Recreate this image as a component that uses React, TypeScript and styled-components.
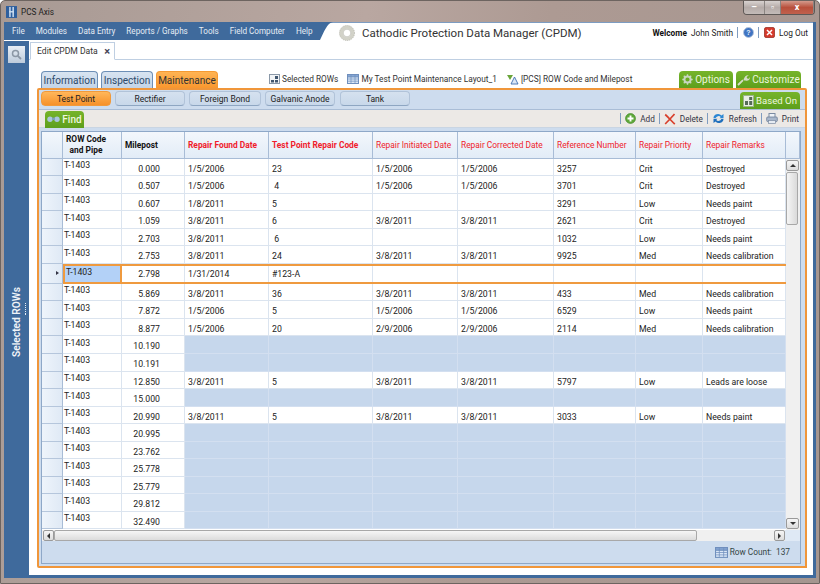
import React from 'react';
import styled, { createGlobalStyle } from 'styled-components';

const Global = createGlobalStyle`
  html, body { margin: 0; padding: 0; background: #fff; }
  #root { width: 820px; height: 584px; overflow: hidden; }
  * { box-sizing: border-box; }
`;

const Win = styled.div`
  width: 820px; height: 584px; display: flex; flex-direction: column;
  font-family: Roboto, "Noto Sans", sans-serif; font-size: 9px; color: #222;
  background: linear-gradient(100deg, #a89a94 0%, #b9a7a1 40%, #ad9a93 60%, #a59690 100%);
  border: 1px solid #6d6460; border-radius: 5px 5px 0 0; overflow: hidden;
`;
const TitleBar = styled.div`
  height: 21px; flex: none; display: flex; align-items: center; padding-left: 5px; gap: 4px;
  font-size: 8.2px; color: #222;
`;
const WinButtons = styled.div`
  margin-left: auto; margin-right: 4px; margin-top: -7px; height: 14px; width: 72px; display: flex;
  border: 1px solid #5e5957; border-top: none; border-radius: 0 0 4px 4px; overflow: hidden;
`;
const WinBtn = styled.div<{ $red?: boolean; $w: number }>`
  width: ${p => p.$w}px; display: flex; align-items: center; justify-content: center;
  background: ${p => p.$red ? 'linear-gradient(#d49a8c,#b8503c 50%,#c0604c)' : 'linear-gradient(#d8d2d0,#b5aba8 50%,#c3bbb8)'};
  border-right: 1px solid #8b8582; color: #fff; font-size: 9px; font-weight: 700; line-height: 1;
`;
const Frame = styled.div`
  flex: 1; margin: 0 3px 5px 3px; background: #3f6a9c; display: flex; flex-direction: column; padding-bottom: 3px; padding-right: 3px;
  min-height: 0;
`;
const Head = styled.div`
  height: 19px; flex: none; display: flex; background: #fff; margin-right: -3px; border-right: 3px solid #3f6a9c;
  box-shadow: inset 0 1px 0 #7c9cc2;
`;
const Menu = styled.div`
  display: flex; align-items: center; height: 18px; background: #3f6a9c; color: #e6edf5; padding-left: 8px; gap: 11px; font-size: 8.15px; width: 316px; flex: none;
  span { white-space: nowrap; }
`;
const Curve = styled.svg` width: 13px; height: 18px; flex: none; `;
const AppTitle = styled.div`
  display: flex; align-items: center; gap: 7px; font-size: 11.5px; color: #333; margin-left: 6px; padding-top: 2px; white-space: nowrap;
`;
const UserBox = styled.div`
  margin-left: auto; display: flex; align-items: center; padding-right: 5px; padding-top: 2px; font-size: 8.3px; white-space: nowrap;
  b { font-weight: 700; color: #111; margin-right: 4px; }
`;
const VSep = styled.i`
  display: inline-block; width: 1px; height: 11px; background: #7f9cc0; margin: 0 5px 0 4px; flex: none;
`;
const ToolSep = styled(VSep)` margin: 0 4px; `;
const Body = styled.div` flex: 1; display: flex; min-height: 0; `;
const Side = styled.div`
  width: 25px; flex: none; display: flex; flex-direction: column; align-items: center; padding-top: 5px;
`;
const SearchBtn = styled.div`
  width: 17px; height: 17px; background: linear-gradient(#e8eef5,#bdcbdb); margin-left: -1px; display: flex; align-items: center; justify-content: center;
`;
const SideLabel = styled.div`
  margin-top: 224px; writing-mode: vertical-rl; transform: rotate(180deg); position: relative;
  color: #f0f4f8; font-weight: 600; font-size: 10.2px; white-space: nowrap; margin-left: -1px;
`;
const Dots = styled.span`
  position: absolute; left: -4px; bottom: 16px; width: 1px; height: 12px; border-left: 1px dotted #e8eef5;
`;
const Content = styled.div`
  flex: 1; min-width: 0; background: #fff; display: flex; flex-direction: column; border-top: 1px solid #fff;
`;
const TabStrip = styled.div`
  height: 18px; flex: none; display: flex; padding-left: 1px; border-bottom: 1px solid #bfcfe2;
`;
const DocTab = styled.div`
  width: 85px; height: 18px; background: #fff; border: 1px solid #bfcfe2; border-bottom: 1px solid #fff; display: flex; align-items: center; justify-content: space-between; padding: 0 4px 0 6px; font-size: 8.6px; color: #333;
  b { font-size: 11px; font-weight: 700; color: #445; line-height: 1; }
`;
const TopRow = styled.div`
  height: 17px; margin-top: 11px; flex: none; display: flex; align-items: flex-end; padding-left: 12px; position: relative; z-index: 1;
`;
const OuterTab = styled.div<{ $on?: boolean; $w: number }>`
  width: ${p => p.$w}px; height: 17px; margin-right: 3px; border-radius: 4px 4px 0 0; display: flex; align-items: center; justify-content: center;
  font-size: 10px; color: ${p => p.$on ? '#333' : '#2d4a6a'}; white-space: nowrap;
  background: ${p => p.$on ? 'linear-gradient(#ffb454,#f9972e)' : 'linear-gradient(#d8e4f1,#c3d4e8)'};
  border: 1px solid ${p => p.$on ? '#f59a33' : '#6d8fb6'}; border-bottom: none;
`;
const Crumbs = styled.div`
  display: flex; align-items: center; margin-left: 48px; height: 17px; font-size: 8.3px; color: #333; white-space: nowrap; padding-bottom: 1px;
`;
const Crumb = styled.span<{ $gap: number }>`
  display: inline-flex; align-items: center; gap: 2px; margin-right: ${p => p.$gap}px;
`;
const GreenTab = styled.div<{ $w: number }>`
  width: ${p => p.$w}px; height: 17px; border-radius: 4px 4px 0 0; background: linear-gradient(#76b42a,#5d9f1c); color: #eef7df;
  display: flex; align-items: center; justify-content: center; gap: 2px; font-size: 10px; white-space: nowrap; flex: none;
`;
const GreenGroup = styled.div` margin-left: auto; margin-right: 12px; display: flex; gap: 3px; `;
const Panel = styled.div`
  margin: 0 6px 7px 8px; flex: 1; min-height: 0; border: 2px solid #f0963a; border-radius: 2px 2px 0 0; border-bottom-left-radius: 2px;
  background: #cddcee; display: flex; flex-direction: column; position: relative;
`;
const SubBar = styled.div`
  height: 20px; flex: none; display: flex; align-items: flex-end; padding: 0 5px 0 2px; border-bottom: 1px solid #a9bdd6;
`;
const SubBtn = styled.div<{ $on?: boolean; $w: number; $gap: number }>`
  width: ${p => p.$w}px; height: 15px; margin-right: ${p => p.$gap}px; margin-bottom: 3px; border-radius: 4px; display: flex; align-items: center; justify-content: center;
  font-size: 8.5px; color: #222; white-space: nowrap;
  background: ${p => p.$on ? 'linear-gradient(#ffb75b,#f6912a)' : 'linear-gradient(#d5e1ef,#c8d8ea)'};
  border: 1px solid ${p => p.$on ? '#f19a3b' : '#b1c3d9'}; border-bottom-color: ${p => p.$on ? '#f19a3b' : '#8ea6c2'};
`;
const BasedOn = styled(GreenTab)` margin-left: auto; font-size: 9.6px; height: 17px; `;
const ToolBar = styled.div`
  height: 18px; flex: none; background: #ece9e6; display: flex; align-items: center; padding: 0 6px; border-bottom: 1px solid #c9d5e3;
`;
const FindBtn = styled(GreenTab)` margin-top: 1px; height: 17px; font-weight: 500; `;
const Actions = styled.div`
  margin-left: auto; display: flex; align-items: center; font-size: 8.2px; color: #334; white-space: nowrap;
`;
const Action = styled.span`
  display: inline-flex; align-items: center; gap: 4px;
`;
const GridBox = styled.div`
  margin: 3px 4px 0 2px; border: 1px solid #8ea8c8; border-bottom: none; background: #fff; display: flex; flex-direction: column; flex: none; width: 760px;
`;
const COLS = '21px 59px 63px 84px 104px 85px 96px 82px 67px 83px 14px';
const HeadRow = styled.div`
  display: grid; grid-template-columns: ${COLS}; height: 26.5px; background: linear-gradient(#f3f7fc,#e2ecf7); border-bottom: 1px solid #a8bcd6;
`;
const HeadCell = styled.div<{ $kind?: 'bold' | 'red' | 'redBold'; $center?: boolean }>`
  border-right: 1px solid #a8bcd6; display: flex; align-items: center; padding: 1px 0 0 3px; line-height: 11px; font-size: 8.4px; white-space: nowrap;
  color: ${p => p.$kind === 'bold' ? '#111' : '#f01c2c'}; font-weight: ${p => p.$kind === 'red' ? 400 : 700};
  text-align: ${p => p.$center ? 'center' : 'left'};
`;
const BodyWrap = styled.div` display: flex; height: 371.5px; overflow: hidden; `;
const Rows = styled.div` width: 744px; flex: none; display: flex; flex-direction: column; `;
const Row = styled.div<{ $sel?: boolean }>`
  display: grid; grid-template-columns: 21px 59px 63px 84px 104px 85px 96px 82px 67px 83px; height: ${p => p.$sel ? 20 : 17.55}px; flex: none; position: relative;
`;
const SelFrame = styled.div`
  position: absolute; left: 21px; right: 0; top: 0; bottom: 0; border-top: 2px solid #ef9a3f; border-bottom: 2px solid #ef9a3f; pointer-events: none;
`;
const RowHeadCell = styled.div`
  background: linear-gradient(90deg,#eef4fb,#dfe9f5); border-right: 1px solid #a8bcd6; border-bottom: 1px solid #b5c6dc; display: flex; align-items: center; justify-content: flex-end; padding-right: 3px;
  i { width: 0; height: 0; border-left: 3px solid #334; border-top: 2.5px solid transparent; border-bottom: 2.5px solid transparent; }
`;
const RowCode = styled.div<{ $sel?: boolean }>`
  border-right: ${p => p.$sel ? '2px solid #ef9a3f' : '1px solid #dbe4ef'}; border-bottom: 1px solid #dbe4ef;
  border-left: ${p => p.$sel ? '2px solid #ef9a3f' : '0'};
  padding: ${p => p.$sel ? '3px 0 0 1px' : '1.5px 0 0 1px'}; font-size: 8.7px; line-height: 11px; color: #222; background: ${p => p.$sel ? '#b3d1f7' : '#fff'};
`;
const Mile = styled.div<{ $sel?: boolean }>`
  border-right: 1px solid #dbe4ef; border-bottom: 1px solid #dbe4ef; text-align: right; padding: ${p => p.$sel ? 5.5 : 5}px 24px 0 0; font-size: 8.7px; line-height: 11px; background: #fff; color: #222;
`;
const Cell = styled.div<{ $blue?: boolean; $sel?: boolean }>`
  border-right: 1px solid ${p => p.$blue ? '#d3dff0' : '#dbe4ef'}; border-bottom: 1px solid ${p => p.$blue ? '#d3dff0' : '#dbe4ef'};
  background: ${p => p.$blue ? '#c6d7ec' : '#fff'}; padding: ${p => p.$sel ? 5.5 : 5}px 0 0 3px; font-size: 8.7px; line-height: 11px; color: #222; white-space: pre;
`;
const VScroll = styled.div`
  width: 14px; flex: none; background: #f0f0f0; display: flex; flex-direction: column; padding: 1px 0;
`;
const ScrollBtn = styled.div<{ $w: number; $h: number }>`
  width: ${p => p.$w}px; height: ${p => p.$h}px; flex: none; background: linear-gradient(#f6f6f6,#dcdcdc); border: 1px solid #9a9a9a; border-radius: 2px; display: flex; align-items: center; justify-content: center;
`;
const Arrow = styled.i<{ $dir: 'up' | 'down' | 'left' | 'right' }>`
  width: 0; height: 0; display: block;
  ${p => p.$dir === 'up' && 'border-bottom: 3px solid #333; border-left: 3px solid transparent; border-right: 3px solid transparent;'}
  ${p => p.$dir === 'down' && 'border-top: 3px solid #333; border-left: 3px solid transparent; border-right: 3px solid transparent;'}
  ${p => p.$dir === 'left' && 'border-right: 3px solid #333; border-top: 3px solid transparent; border-bottom: 3px solid transparent;'}
  ${p => p.$dir === 'right' && 'border-left: 3px solid #333; border-top: 3px solid transparent; border-bottom: 3px solid transparent;'}
`;
const VThumb = styled.div`
  width: 12px; height: 53px; margin: 1px 0 0 0; background: linear-gradient(90deg,#f5f5f5,#dadada); border: 1px solid #a8a8a8; border-radius: 2px; flex: none;
`;
const HBar = styled.div`
  height: 11px; flex: none; display: flex; background: #f0f0f0; padding-left: 1px; width: 758px;
`;
const HThumb = styled.div`
  width: 643px; height: 11px; background: linear-gradient(#f6f6f6,#dcdcdc); border: 1px solid #a8a8a8; border-radius: 2px; flex: none;
`;
const HGap = styled.div` flex: 1; `;
const HCorner = styled.div` width: 15px; height: 11px; background: #dfe9f5; flex: none; `;
const GridOuter = styled.div`
  display: flex; flex-direction: column; flex: 1; min-height: 0;
`;
const HWrap = styled.div`
  margin: 0 4px 0 2px; width: 760px; border-left: 1px solid #8ea8c8; border-right: 1px solid #8ea8c8; display: flex; flex: none;
`;
const Foot = styled.div`
  margin: 0 4px 2px 2px; width: 760px; flex: 1; border: 1px solid #8ea8c8; border-top: none; background: #cddcee; display: flex; align-items: flex-start; justify-content: flex-end; padding: 6px 10px 0 0; gap: 2px; font-size: 8.3px; color: #344;
`;

const GridIcon = ({ s = 11 }: { s?: number }) => (
  <svg width={s + 1} height={s - 1} viewBox="0 0 12 10">
    <rect x=".5" y=".5" width="11" height="9" fill="#dbe7f6" stroke="#6f8fbd" />
    <rect x=".5" y=".5" width="11" height="2.4" fill="#86a6d4" stroke="#6f8fbd" />
    <path d="M4 1v8M8 1v8M1 5h10M1 7.2h10" stroke="#6f8fbd" strokeWidth=".7" />
  </svg>
);
const SelIcon = () => (
  <svg width="11" height="10" viewBox="0 0 11 10">
    <rect x=".5" y=".5" width="10" height="9" fill="#f2f4f6" stroke="#8a98a8" />
    <path d="M2 6h3v2.5H2zM6 6h3v2.5H6zM6 2h3v3H6z" fill="#40566f" />
  </svg>
);
const SortIcon = () => (
  <svg width="13" height="11" viewBox="0 0 13 11">
    <path d="M1 1h6L4 6z" fill="#6aa53a" />
    <path d="M8.5 3L12 10H5z" fill="#dbe7f6" stroke="#3e6eb0" strokeWidth=".9" />
  </svg>
);
const Plus = () => (
  <svg width="11" height="11" viewBox="0 0 11 11">
    <circle cx="5.5" cy="5.5" r="5" fill="#5fa83a" stroke="#3e8724" strokeWidth=".6" />
    <path d="M2.5 5.5h6M5.5 2.5v6" stroke="#fff" strokeWidth="1.9" />
  </svg>
);
const RedX = () => (
  <svg width="12" height="12" viewBox="0 0 12 12">
    <path d="M1.2 1.5 C4 4 7.5 8 10.8 11.2M10.5 1 C8 4 4 8 1.2 11" stroke="#d8402c" strokeWidth="1.7" fill="none" />
  </svg>
);
const Refresh = () => (
  <svg width="13" height="11" viewBox="0 0 13 11">
    <path d="M1.5 5A4.5 4 0 0 1 9.5 2.5L11.5 1v4.2H7.5l1.3-1.3A3 2.6 0 0 0 3.7 5z" fill="#2c87d4" />
    <path d="M11.5 6A4.5 4 0 0 1 3.5 8.5L1.5 10V5.8h4L4.2 7.1A3 2.6 0 0 0 9.3 6z" fill="#1f6fbc" />
  </svg>
);
const Printer = () => (
  <svg width="12" height="11" viewBox="0 0 12 11">
    <rect x="3" y=".5" width="6" height="4" fill="#eef2f7" stroke="#7b8ba2" />
    <rect x=".7" y="4" width="10.6" height="4.6" rx="1" fill="#a9b7cb" stroke="#6d7e97" strokeWidth=".8" />
    <rect x="2.5" y="7.5" width="7" height="3" fill="#e6ebf2" stroke="#7b8ba2" strokeWidth=".7" />
  </svg>
);
const Gear = () => (
  <svg width="11" height="11" viewBox="0 0 11 11">
    <circle cx="5.5" cy="5.5" r="3.1" fill="none" stroke="#c8d6c0" strokeWidth="2" />
    <path d="M5.5.3v2M5.5 8.7v2M.3 5.5h2M8.7 5.5h2M1.8 1.8l1.4 1.4M7.8 7.8l1.4 1.4M1.8 9.2l1.4-1.4M7.8 3.2l1.4-1.4" stroke="#c8d6c0" strokeWidth="1.4" />
  </svg>
);
const Wrench = () => (
  <svg width="13" height="12" viewBox="0 0 13 12">
    <path d="M1 11L6 6.2M7 6l2-2" stroke="#d5ddc8" strokeWidth="1.8" />
    <path d="M7.5 5.5C6.8 3 8.8.8 11.8 1.2L9.6 3l.6 1.5 1.7.2 1-1.7c.3 2.8-2 4.3-4.2 3.7z" fill="#d5ddc8" />
  </svg>
);
const BasedIcon = () => (
  <svg width="11" height="12" viewBox="0 0 11 12">
    <rect x=".5" y=".5" width="10" height="11" fill="#e9efe4" stroke="#9ab38a" />
    <path d="M2 6h3v4H2zM6.2 6h3v4h-3zM6.2 2h3v3h-3z" fill="#556a58" />
  </svg>
);
const Binoc = () => (
  <svg width="13" height="8" viewBox="0 0 13 8">
    <circle cx="3" cy="4.2" r="2.7" fill="#a9c6dc" />
    <circle cx="10" cy="4.2" r="2.7" fill="#a9c6dc" />
    <rect x="5" y="2.6" width="3" height="2.4" fill="#7ea0b8" />
  </svg>
);
const Logo = () => (
  <svg width="11" height="12" viewBox="0 0 12 13">
    <rect x="0" y="0" width="12" height="13" fill="#2e5f9e" />
    <rect x="3.5" y="1" width="1.6" height="11" fill="#cfe0f2" />
    <rect x="7" y="1" width="1.6" height="11" fill="#cfe0f2" />
    <rect x="3.5" y="5.5" width="5" height="1.5" fill="#cfe0f2" />
  </svg>
);
const Ring = () => (
  <svg width="16" height="16" viewBox="0 0 19 19">
    <circle cx="9.5" cy="9.5" r="7" fill="none" stroke="#d2d2c8" strokeWidth="4" />
    <circle cx="9.5" cy="9.5" r="9" fill="none" stroke="#a6a69a" strokeWidth=".7" strokeDasharray="1.5 1" />
    <circle cx="9.5" cy="9.5" r="4.6" fill="#fff" stroke="#a6a69a" strokeWidth=".7" />
  </svg>
);
const Help = () => (
  <svg width="11" height="11" viewBox="0 0 11 11">
    <circle cx="5.5" cy="5.5" r="5" fill="#3f74c2" stroke="#b6c6dc" />
    <text x="5.5" y="8" textAnchor="middle" fontSize="7" fontWeight="700" fill="#e8f0fa" fontFamily="Liberation Sans, sans-serif">?</text>
  </svg>
);
const LogOutIcon = () => (
  <svg width="11" height="11" viewBox="0 0 11 11">
    <rect x=".5" y=".5" width="10" height="10" rx="1.5" fill="#d63a2c" stroke="#8e2418" strokeWidth=".7" />
    <path d="M3 3l5 5M8 3l-5 5" stroke="#fff" strokeWidth="1.5" />
  </svg>
);
const Mag = () => (
  <svg width="11" height="11" viewBox="0 0 11 11">
    <circle cx="4.5" cy="4.5" r="3" fill="none" stroke="#8b97a5" strokeWidth="1.5" />
    <path d="M6.8 6.8L10 10" stroke="#8b97a5" strokeWidth="1.8" />
  </svg>
);

type R = { m: string; d?: string[]; sel?: boolean };
const data: R[] = [
  { m: '0.000', d: ['1/5/2006', '23', '1/5/2006', '1/5/2006', '3257', 'Crit', 'Destroyed'] },
  { m: '0.507', d: ['1/5/2006', ' 4', '1/5/2006', '1/5/2006', '3701', 'Crit', 'Destroyed'] },
  { m: '0.607', d: ['1/8/2011', '5', '', '', '3291', 'Low', 'Needs paint'] },
  { m: '1.059', d: ['3/8/2011', '6', '3/8/2011', '3/8/2011', '2621', 'Crit', 'Destroyed'] },
  { m: '2.703', d: ['3/8/2011', ' 6', '', '', '1032', 'Low', 'Needs paint'] },
  { m: '2.753', d: ['3/8/2011', '24', '3/8/2011', '3/8/2011', '9925', 'Med', 'Needs calibration'] },
  { m: '2.798', sel: true, d: ['1/31/2014', '#123-A', '', '', '', '', ''] },
  { m: '5.869', d: ['3/8/2011', '36', '3/8/2011', '3/8/2011', '433', 'Med', 'Needs calibration'] },
  { m: '7.872', d: ['1/5/2006', '5', '1/5/2006', '1/5/2006', '6529', 'Low', 'Needs paint'] },
  { m: '8.877', d: ['1/5/2006', '20', '2/9/2006', '2/9/2006', '2114', 'Med', 'Needs calibration'] },
  { m: '10.190' },
  { m: '10.191' },
  { m: '12.850', d: ['3/8/2011', '5', '3/8/2011', '3/8/2011', '5797', 'Low', 'Leads are loose'] },
  { m: '15.000' },
  { m: '20.990', d: ['3/8/2011', '5', '3/8/2011', '3/8/2011', '3033', 'Low', 'Needs paint'] },
  { m: '20.995' }, { m: '23.762' }, { m: '25.778' }, { m: '25.779' }, { m: '29.812' }, { m: '32.490' },
];
const empty = ['', '', '', '', '', '', ''];

export default function App() {
  return (
    <Win>
      <Global />
      <TitleBar>
        <Logo />
        <span>PCS Axis</span>
        <WinButtons>
          <WinBtn $w={21}>–</WinBtn>
          <WinBtn $w={16}>▫</WinBtn>
          <WinBtn $w={33} $red>x</WinBtn>
        </WinButtons>
      </TitleBar>
      <Frame>
        <Head>
          <Menu>
            <span>File</span><span>Modules</span><span>Data Entry</span><span>Reports / Graphs</span><span>Tools</span><span>Field Computer</span><span>Help</span>
          </Menu>
          <Curve viewBox="0 0 13 18"><path d="M0 0H13C7 1 4 10 0 18Z" fill="#3f6a9c" /></Curve>
          <AppTitle><Ring /><span>Cathodic Protection Data Manager (CPDM)</span></AppTitle>
          <UserBox>
            <b>Welcome</b><span>John Smith</span><VSep /><Help /><VSep /><LogOutIcon /><span>&nbsp;&nbsp;Log Out</span>
          </UserBox>
        </Head>
        <Body>
          <Side>
            <SearchBtn><Mag /></SearchBtn>
            <SideLabel>Selected ROWs<Dots /></SideLabel>
          </Side>
          <Content>
            <TabStrip><DocTab><span>Edit CPDM Data</span><b>×</b></DocTab></TabStrip>
            <TopRow>
              <OuterTab $w={57}>Information</OuterTab>
              <OuterTab $w={52}>Inspection</OuterTab>
              <OuterTab $w={62} $on>Maintenance</OuterTab>
              <Crumbs>
                <Crumb $gap={9}><SelIcon />Selected ROWs</Crumb>
                <Crumb $gap={9}><GridIcon />My Test Point Maintenance Layout_1</Crumb>
                <Crumb $gap={0}><SortIcon />[PCS] ROW Code and Milepost</Crumb>
              </Crumbs>
              <GreenGroup>
                <GreenTab $w={54}><Gear />Options</GreenTab>
                <GreenTab $w={65}><Wrench />Customize</GreenTab>
              </GreenGroup>
            </TopRow>
            <Panel>
              <SubBar>
                <SubBtn $w={70} $gap={4} $on>Test Point</SubBtn>
                <SubBtn $w={70} $gap={4}>Rectifier</SubBtn>
                <SubBtn $w={72} $gap={4}>Foreign Bond</SubBtn>
                <SubBtn $w={70} $gap={5}>Galvanic Anode</SubBtn>
                <SubBtn $w={70} $gap={0}>Tank</SubBtn>
                <BasedOn $w={60}><BasedIcon />Based On</BasedOn>
              </SubBar>
              <ToolBar>
                <FindBtn $w={39}><Binoc />Find</FindBtn>
                <Actions>
                  <ToolSep />
                  <Action><Plus />Add</Action><ToolSep />
                  <Action><RedX />Delete</Action><ToolSep />
                  <Action><Refresh />Refresh</Action><ToolSep />
                  <Action><Printer />Print</Action>
                </Actions>
              </ToolBar>
              <GridOuter>
                <GridBox>
                  <HeadRow>
                    <HeadCell />
                    <HeadCell $kind="bold" $center><span>ROW Code<br />and Pipe</span></HeadCell>
                    <HeadCell $kind="bold">Milepost</HeadCell>
                    <HeadCell $kind="redBold">Repair Found Date</HeadCell>
                    <HeadCell $kind="redBold">Test Point Repair Code</HeadCell>
                    <HeadCell $kind="red">Repair Initiated Date</HeadCell>
                    <HeadCell $kind="red">Repair Corrected Date</HeadCell>
                    <HeadCell $kind="red">Reference Number</HeadCell>
                    <HeadCell $kind="red">Repair Priority</HeadCell>
                    <HeadCell $kind="red">Repair Remarks</HeadCell>
                    <HeadCell />
                  </HeadRow>
                  <BodyWrap>
                    <Rows>
                      {data.map(r => (
                        <Row key={r.m} $sel={r.sel}>
                          <RowHeadCell>{r.sel && <i />}</RowHeadCell>
                          <RowCode $sel={r.sel}>T-1403</RowCode>
                          <Mile $sel={r.sel}>{r.m}</Mile>
                          {(r.d ?? empty).map((v, i) => <Cell key={i} $blue={!r.d} $sel={r.sel}>{v}</Cell>)}
                          {r.sel && <SelFrame />}
                        </Row>
                      ))}
                    </Rows>
                    <VScroll>
                      <ScrollBtn $w={13} $h={11}><Arrow $dir="up" /></ScrollBtn>
                      <VThumb />
                      <HGap />
                      <ScrollBtn $w={13} $h={11}><Arrow $dir="down" /></ScrollBtn>
                    </VScroll>
                  </BodyWrap>
                </GridBox>
                <HWrap>
                  <HBar>
                    <ScrollBtn $w={11} $h={11}><Arrow $dir="left" /></ScrollBtn>
                    <HThumb />
                    <HGap />
                    <ScrollBtn $w={11} $h={11}><Arrow $dir="right" /></ScrollBtn>
                    <HCorner />
                  </HBar>
                </HWrap>
                <Foot><GridIcon s={12} /><span>Row Count:&nbsp; 137</span></Foot>
              </GridOuter>
            </Panel>
          </Content>
        </Body>
      </Frame>
    </Win>
  );
}
